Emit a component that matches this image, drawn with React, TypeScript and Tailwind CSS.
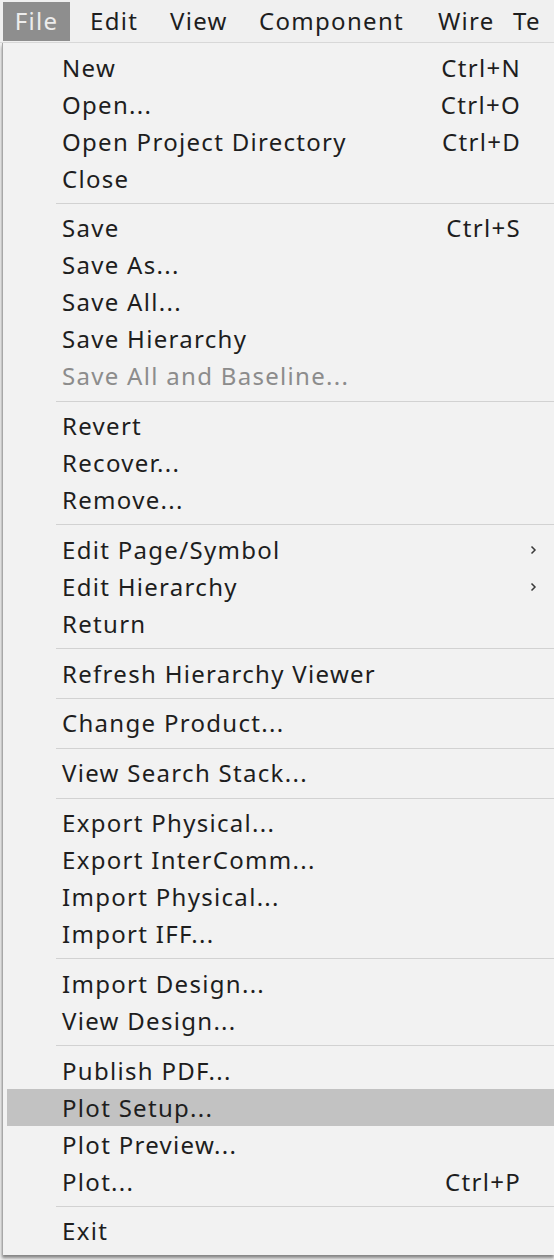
import React from "react";

type Item =
  | { sep: true }
  | { label: string; shortcut?: string; sub?: boolean; disabled?: boolean; active?: boolean; sep?: false };

const items: Item[] = [
  { label: "New", shortcut: "Ctrl+N" },
  { label: "Open...", shortcut: "Ctrl+O" },
  { label: "Open Project Directory", shortcut: "Ctrl+D" },
  { label: "Close" },
  { sep: true },
  { label: "Save", shortcut: "Ctrl+S" },
  { label: "Save As..." },
  { label: "Save All..." },
  { label: "Save Hierarchy" },
  { label: "Save All and Baseline...", disabled: true },
  { sep: true },
  { label: "Revert" },
  { label: "Recover..." },
  { label: "Remove..." },
  { sep: true },
  { label: "Edit Page/Symbol", sub: true },
  { label: "Edit Hierarchy", sub: true },
  { label: "Return" },
  { sep: true },
  { label: "Refresh Hierarchy Viewer" },
  { sep: true },
  { label: "Change Product..." },
  { sep: true },
  { label: "View Search Stack..." },
  { sep: true },
  { label: "Export Physical..." },
  { label: "Export InterComm..." },
  { label: "Import Physical..." },
  { label: "Import IFF..." },
  { sep: true },
  { label: "Import Design..." },
  { label: "View Design..." },
  { sep: true },
  { label: "Publish PDF..." },
  { label: "Plot Setup...", active: true },
  { label: "Plot Preview..." },
  { label: "Plot...", shortcut: "Ctrl+P" },
  { sep: true },
  { label: "Exit" },
];

export default function App() {
  return (
    <div
      className="w-[554px] h-[1260px] overflow-hidden bg-[#f0f0f0] text-[#1e1e1e]"
      style={{ fontFamily: '"Noto Sans", "Open Sans", sans-serif' }}
    >
      <div className="flex h-[43px] items-center border-b border-[#d9d9d9] bg-[#f0f0f0] pl-[3px] text-[24px] leading-none tracking-[1.3px]">
        <div className="flex h-[39px] w-[67px] items-center justify-center bg-[#8e8e8e] text-[#ececec]">File</div>
        <div className="ml-[20px] w-[80px] shrink-0">Edit</div>
        <div className="w-[89px] shrink-0">View</div>
        <div className="w-[179px] shrink-0">Component</div>
        <div className="w-[75px] shrink-0">Wire</div>
        <div className="whitespace-nowrap">Te</div>
      </div>
      <div className="ml-[2px] h-[1212px] border-l border-[#a8a8a8] bg-[#f2f2f2] pt-[6px] shadow-[0_3px_3px_rgba(0,0,0,0.45)]">
        {items.map((it, i) =>
          it.sep ? (
            <div key={i} className="flex h-[12.8px] items-center pl-[53px]">
              <div className="h-px w-full bg-[#d2d2d2]" />
            </div>
          ) : (
            <div
              key={i}
              className={`ml-[4px] flex h-[37px] items-center text-[24px] leading-none tracking-[1.3px] ${
                it.active ? "bg-[#c2c2c2]" : ""
              } ${it.disabled ? "text-[#8c8c8c]" : ""}`}
            >
              <div className="flex-1 whitespace-nowrap pl-[55px]">{it.label}</div>
              {it.shortcut && <div className="w-[130px] pr-[33px] text-right">{it.shortcut}</div>}
              {it.sub && (
                <div className="flex w-[60px] justify-end pr-[17px]">
                  <svg width="7" height="10" viewBox="0 0 7 10">
                    <path d="M1.5 1.5 L5 5 L1.5 8.5" fill="none" stroke="#3a3a3a" strokeWidth="1.5" />
                  </svg>
                </div>
              )}
            </div>
          )
        )}
      </div>
    </div>
  );
}
